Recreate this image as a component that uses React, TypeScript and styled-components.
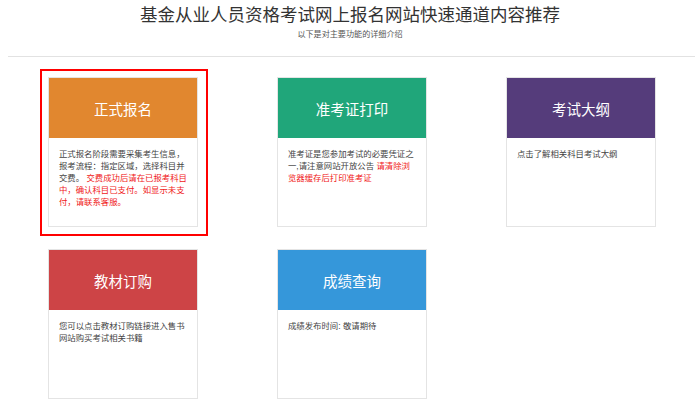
import React from "react";
import styled, { createGlobalStyle, css } from "styled-components";

const GlobalStyle = createGlobalStyle`
	html, body {
		margin: 0;
		padding: 0;
		background: #fff;
	}
	body {
		font-family: "Liberation Sans", "Noto Sans CJK SC", sans-serif;
		color: #333;
	}
`;

const StyledPage = styled.div`
	width: 700px;
	padding-top: 5px;
`;

const StyledHeader = styled.header`
	display: flex;
	flex-direction: column;
	align-items: center;
`;

const StyledTitle = styled.h1`
	margin: 0;
	font-size: 17.5px;
	line-height: 20px;
	font-weight: normal;
	color: #333;
`;

const StyledSubtitle = styled.p`
	margin: 4px 0 0;
	font-size: 8.1px;
	line-height: 12px;
	color: #555;
`;

const StyledDivider = styled.hr`
	margin: 15px 5px 0 8px;
	border: 0;
	height: 1px;
	background: #e2e2e2;
`;

const StyledGrid = styled.ul`
	list-style: none;
	margin: 20px 0 0;
	padding: 0 0 0 48px;
	display: grid;
	grid-template-columns: repeat(3, 150px);
	column-gap: 79px;
	row-gap: 22px;
`;

const StyledCard = styled.li<{ $highlight?: boolean }>`
	position: relative;
	box-sizing: border-box;
	width: 150px;
	height: 150px;
	border: 1px solid #e4e4e4;
	background: #fff;
	display: flex;
	flex-direction: column;

	${({ $highlight }) =>
		$highlight &&
		css`
			&::after {
				content: "";
				position: absolute;
				top: -9px;
				left: -9px;
				right: -11px;
				bottom: -10px;
				border: 2px solid #f00;
				pointer-events: none;
			}
		`}
`;

const StyledCardHead = styled.div<{ $color: string }>`
	height: 60px;
	background: ${({ $color }) => $color};
	display: flex;
	align-items: center;
	justify-content: center;
	color: #fff;
	font-size: 14.5px;
`;

const StyledCardBody = styled.div`
	padding: 10px 9px 0 10px;
	font-size: 8.4px;
	line-height: 12px;
	color: #444;
`;

const StyledAccent = styled.span`
	color: #f01818;
`;

type CardData = {
	title: string;
	color: string;
	body: React.ReactNode;
	highlight?: boolean;
};

const CARDS: CardData[] = [
	{
		title: "正式报名",
		color: "#e1872f",
		highlight: true,
		body: (
			<>
				正式报名阶段需要采集考生信息，报考流程：指定区域，选择科目并交费。{" "}
				<StyledAccent>交费成功后请在已报考科目中，确认科目已支付。如显示未支付，请联系客服。</StyledAccent>
			</>
		),
	},
	{
		title: "准考证打印",
		color: "#20a67a",
		body: (
			<>
				准考证是您参加考试的必要凭证之一,请注意网站开放公告{" "}
				<StyledAccent>请清除浏览器缓存后打印准考证</StyledAccent>
			</>
		),
	},
	{
		title: "考试大纲",
		color: "#553c7b",
		body: "点击了解相关科目考试大纲",
	},
	{
		title: "教材订购",
		color: "#cd4446",
		body: "您可以点击教材订购链接进入售书网站购买考试相关书籍",
	},
	{
		title: "成绩查询",
		color: "#3597da",
		body: "成绩发布时间: 敬请期待",
	},
];

function App() {
	return (
		<>
			<GlobalStyle />
			<StyledPage>
				<StyledHeader>
					<StyledTitle>基金从业人员资格考试网上报名网站快速通道内容推荐</StyledTitle>
					<StyledSubtitle>以下是对主要功能的详细介绍</StyledSubtitle>
				</StyledHeader>
				<StyledDivider />
				<StyledGrid>
					{CARDS.map((card) => (
						<StyledCard key={card.title} $highlight={card.highlight}>
							<StyledCardHead $color={card.color}>{card.title}</StyledCardHead>
							<StyledCardBody>{card.body}</StyledCardBody>
						</StyledCard>
					))}
				</StyledGrid>
			</StyledPage>
		</>
	);
}

export default App;
